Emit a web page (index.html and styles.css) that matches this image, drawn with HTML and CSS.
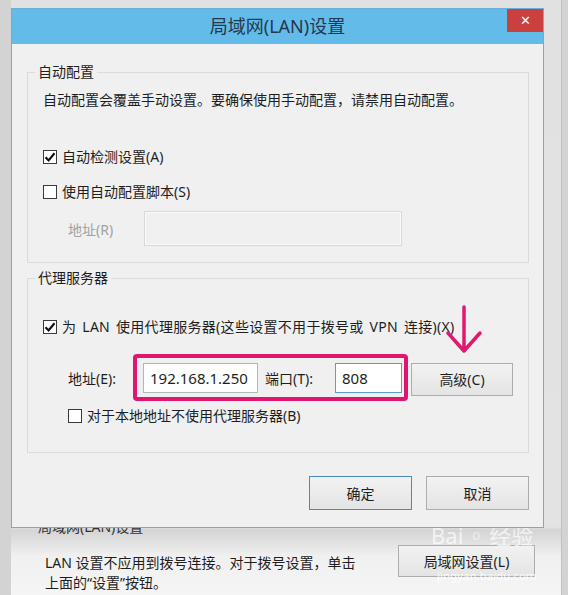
FILE: index.html
```html
<!DOCTYPE html>
<html>
<head>
    <meta charset="utf-8">
    <title>局域网(LAN)设置</title>
    <link rel="stylesheet" href="styles.css">
</head>
<body>
    <div class="screen">
        <div class="window">
            <div class="titlebar">
                <span class="title">局域网(LAN)设置</span>
                <span class="close">✕</span>
            </div>
            <div class="content">
                <div class="group group-auto">
                    <span class="group-title">自动配置</span>
                    <p class="note">自动配置会覆盖手动设置。要确保使用手动配置，请禁用自动配置。</p>
                    <label class="check check-detect">
                        <span class="box"><svg viewBox="0 0 14 14" width="14" height="14"><path d="M2.5 7.2 L5.6 10.4 L11.5 3.2" fill="none" stroke="#111" stroke-width="2.2"/></svg></span>
                        自动检测设置(A)
                    </label>
                    <label class="check check-script">
                        <span class="box"></span>
                        使用自动配置脚本(S)
                    </label>
                    <div class="field-row disabled">
                        <span class="field-label">地址(R)</span>
                        <span class="input input-script"></span>
                    </div>
                </div>
                <div class="group group-proxy">
                    <span class="group-title">代理服务器</span>
                    <label class="check check-proxy">
                        <span class="box"><svg viewBox="0 0 14 14" width="14" height="14"><path d="M2.5 7.2 L5.6 10.4 L11.5 3.2" fill="none" stroke="#111" stroke-width="2.2"/></svg></span>
                        <span class="wide">为 LAN 使用代理服务器(这些设置不用于拨号或 VPN 连接)(X)</span>
                    </label>
                    <div class="proxy-row">
                        <span class="field-label label-addr">地址(E):</span>
                        <div class="highlight">
                            <span class="input input-addr">192.168.1.250</span>
                            <span class="port-label">端口(T):</span>
                            <span class="input input-port">808</span>
                        </div>
                        <button class="btn btn-advanced">高级(C)</button>
                    </div>
                    <label class="check check-local">
                        <span class="box"></span>
                        对于本地地址不使用代理服务器(B)
                    </label>
                </div>
                <div class="actions">
                    <button class="btn btn-default">确定</button>
                    <button class="btn">取消</button>
                </div>
            </div>
            <svg class="arrow" viewBox="0 0 40 50" width="40" height="50">
                <path d="M19 2 L19 46 M3 28 L19 46 L35 28" fill="none" stroke="#e0186f" stroke-width="3.5" stroke-linecap="round" stroke-linejoin="round"/>
            </svg>
        </div>
        <div class="under">
            <span class="under-title">局域网(LAN)设置</span>
            <div class="under-row">
                <p class="under-text">LAN 设置不应用到拨号连接。对于拨号设置，单击<br>上面的“设置”按钮。</p>
                <button class="btn btn-lan">局域网设置(L)</button>
            </div>
            <span class="watermark">Bai<span class="paw">◦</span>经验</span>
            <span class="watermark-url">jingyan.baidu.com</span>
        </div>
    </div>
</body>
</html>
```

FILE: styles.css
```css
body{
    margin: 0;
    background-color: #d3d3d3;
    font-family: "Noto Sans", "Noto Sans CJK SC", sans-serif;
    font-size: 14px;
    color: #1e1e1e;
}

.screen{
    position: relative;
    margin-left: 11px;
    width: 551px;
    height: 595px;
    overflow: hidden;
    border-right: 1px solid #c2c2c2;
    box-sizing: border-box;
    background: linear-gradient(to bottom, #e1e1e1 0, #e3e3e3 527px, #d4d4d4 530px, #f0f0f0 556px, #f5f5f5 100%);
}

.window{
    position: relative;
    z-index: 1;
    margin-top: 8px;
    width: 533px;
    height: 520px;
    box-sizing: border-box;
    border: 1px solid #6aaed9;
    background-color: #f0f0f0;
}

.titlebar{
    display: flex;
    height: 35px;
    background-color: #63bbea;
}

.title{
    flex: 1;
    padding-left: 36px;
    text-align: center;
    font-size: 18px;
    line-height: 34px;
    color: #25374a;
}

.close{
    width: 36px;
    height: 23px;
    background-color: #c9403e;
    color: #ffffff;
    font-size: 13px;
    line-height: 23px;
    text-align: center;
}

.content{
    padding: 0 14px 0 15px;
}

.group{
    border: 1px solid #d7dce0;
    padding: 0 15px;
}

.group-auto{
    margin-top: 28px;
    padding-bottom: 16px;
}

.group-proxy{
    margin-top: 15px;
    padding-bottom: 26px;
}

.group-title{
    display: block;
    width: fit-content;
    margin: -11px 0 0 -8px;
    padding: 0 3px;
    line-height: 20px;
    background-color: #f0f0f0;
}

.note{
    margin: 8px 0 0;
    line-height: 20px;
}

.check{
    display: flex;
    align-items: center;
    line-height: 20px;
}

.wide{
    word-spacing: 2px;
    letter-spacing: 0.3px;
}

.box{
    width: 14px;
    height: 14px;
    margin-right: 5px;
    box-sizing: border-box;
    border: 1px solid #3a3a3a;
    background-color: #ffffff;
    display: flex;
}

.box svg{
    margin: -1px;
}

.check-detect{
    margin-top: 37px;
}

.check-script{
    margin-top: 15px;
}

.check-proxy{
    margin-top: 29px;
}

.check-local{
    margin-top: 5px;
    margin-left: 25px;
}

.field-row{
    display: flex;
    align-items: center;
    margin-top: 9px;
    padding-left: 25px;
}

.field-label{
    width: 76px;
}

.disabled .field-label{
    color: #a2a2a2;
}

.input{
    display: block;
    box-sizing: border-box;
    height: 30px;
    padding-left: 6px;
    line-height: 28px;
    font-size: 15px;
    background-color: #ffffff;
    border: 1px solid #b4b6bb;
}

.input-script{
    width: 258px;
    height: 35px;
    background-color: #f0f0f0;
    border-color: #d8d8d8;
    box-shadow: inset 0 0 0 1px #fbfbfb;
}

.proxy-row{
    display: flex;
    align-items: center;
    margin-top: 17px;
    padding-left: 25px;
}

.label-addr{
    width: 65px;
}

.highlight{
    display: flex;
    align-items: center;
    height: 47px;
    box-sizing: border-box;
    padding: 0 2px 0 6px;
    border: 4px solid #e0156d;
    border-radius: 4px;
}

.input-addr{
    width: 115px;
}

.port-label{
    width: 70px;
    margin-left: 7px;
}

.input-port{
    width: 67px;
    border-color: #5d9bd3;
}

.btn{
    box-sizing: border-box;
    height: 34px;
    font-family: inherit;
    font-size: 14px;
    color: #1e1e1e;
    border: 1px solid #adadad;
    background: linear-gradient(to bottom, #f2f2f2, #e4e4e4);
    padding: 0;
}

.btn-advanced{
    width: 102px;
    height: 33px;
    margin: 3px 0 0 3px;
}

.actions{
    display: flex;
    justify-content: flex-end;
    gap: 14px;
    margin-top: 23px;
}

.actions .btn{
    width: 103px;
}

.btn-default{
    border-color: #4a8ac4;
}

.arrow{
    position: absolute;
    left: 433px;
    top: 296px;
}

.under{
    position: relative;
    padding-left: 27px;
}

.under-title{
    display: block;
    margin-top: -11px;
    line-height: 20px;
    color: #333333;
}

.under-row{
    display: flex;
    align-items: flex-start;
    margin-top: 16px;
}

.under-text{
    margin: 0;
    padding-left: 7px;
    line-height: 20px;
}

.btn-lan{
    width: 137px;
    height: 32px;
    margin: -8px 26px 0 auto;
}

.watermark{
    position: absolute;
    left: 420px;
    top: 6px;
    font-size: 22px;
    line-height: 24px;
    color: rgba(255, 255, 255, 0.7);
}

.paw{
    margin: 0 2px;
}

.watermark-url{
    position: absolute;
    left: 426px;
    top: 52px;
    font-size: 11.5px;
    line-height: 14px;
    color: rgba(255, 255, 255, 0.85);
}
```
